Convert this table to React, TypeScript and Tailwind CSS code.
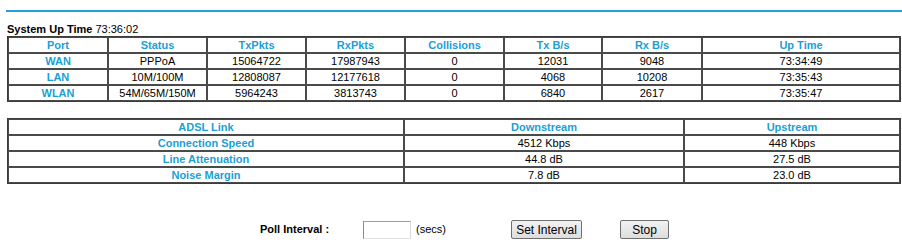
import React from "react";

const font = { fontFamily: '"Liberation Sans", Arial, sans-serif' };

const th = "border border-[#4a4a4a] p-0 text-center font-bold text-[#1a9fd6] text-[11px] leading-[14px]";
const td = "border border-[#4a4a4a] p-0 text-center text-black text-[11px] leading-[14px]";

const ports = [
  ["WAN", "PPPoA", "15064722", "17987943", "0", "12031", "9048", "73:34:49"],
  ["LAN", "10M/100M", "12808087", "12177618", "0", "4068", "10208", "73:35:43"],
  ["WLAN", "54M/65M/150M", "5964243", "3813743", "0", "6840", "2617", "73:35:47"],
];

const adsl = [
  ["Connection Speed", "4512 Kbps", "448 Kbps"],
  ["Line Attenuation", "44.8 dB", "27.5 dB"],
  ["Noise Margin", "7.8 dB", "23.0 dB"],
];

export default function App() {
  return (
    <div className="w-[902px] h-[247px] bg-white overflow-hidden" style={font}>
      <div className="pt-[10px] pl-[6px]">
        <div className="h-[2px] bg-[#22a3d6]" />
      </div>
      <div className="pl-[7px] pr-[1px]">
        <div className="mt-[11px] h-[12px] text-[11px] leading-[12px] text-black">
          <span className="font-bold">System Up Time</span> 73:36:02
        </div>
        <table
          className="mt-[1px] w-[894px] table-fixed border border-[#3c3c3c]"
          style={{ borderCollapse: "separate", borderSpacing: 0 }}
        >
          <colgroup>
            <col className="w-[100px]" />
            <col className="w-[99px]" />
            <col className="w-[99px]" />
            <col className="w-[99px]" />
            <col className="w-[99px]" />
            <col className="w-[98px]" />
            <col className="w-[100px]" />
            <col />
          </colgroup>
          <thead>
            <tr>
              {["Port", "Status", "TxPkts", "RxPkts", "Collisions", "Tx B/s", "Rx B/s", "Up Time"].map((h) => (
                <th key={h} className={th}>
                  {h}
                </th>
              ))}
            </tr>
          </thead>
          <tbody>
            {ports.map((r) => (
              <tr key={r[0]}>
                {r.map((c, i) => (
                  <td key={i} className={i === 0 ? th : td}>
                    {c}
                  </td>
                ))}
              </tr>
            ))}
          </tbody>
        </table>

        <table
          className="mt-[16px] w-[894px] table-fixed border border-[#3c3c3c]"
          style={{ borderCollapse: "separate", borderSpacing: 0 }}
        >
          <colgroup>
            <col className="w-[396px]" />
            <col className="w-[280px]" />
            <col />
          </colgroup>
          <thead>
            <tr>
              <th className={th}>ADSL Link</th>
              <th className={th}>Downstream</th>
              <th className={th}>Upstream</th>
            </tr>
          </thead>
          <tbody>
            {adsl.map((r) => (
              <tr key={r[0]}>
                <td className={th}>{r[0]}</td>
                <td className={td}>{r[1]}</td>
                <td className={td}>{r[2]}</td>
              </tr>
            ))}
          </tbody>
        </table>
      </div>

      <div className="mt-[36px] flex items-center h-[19px] text-[11px] text-black">
        <div className="pl-[260px] w-[363px] font-bold">Poll Interval :</div>
        <div className="w-[48px] h-[18px] border border-t-[#a0a0a0] border-l-[#8a8a8a] border-r-[#dadada] border-b-[#e3e3e3] bg-white" />
        <div className="ml-[5px] w-[95px]">(secs)</div>
        <button className="w-[71px] h-[19px] border border-[#707070] rounded-[2px] bg-gradient-to-b from-[#f2f2f2] to-[#dddddd] text-[12px] leading-[16px] text-black" style={font}>
          Set Interval
        </button>
        <button className="ml-[38px] w-[49px] h-[19px] border border-[#707070] rounded-[2px] bg-gradient-to-b from-[#f2f2f2] to-[#dddddd] text-[12px] leading-[16px] text-black" style={font}>
          Stop
        </button>
      </div>
    </div>
  );
}
